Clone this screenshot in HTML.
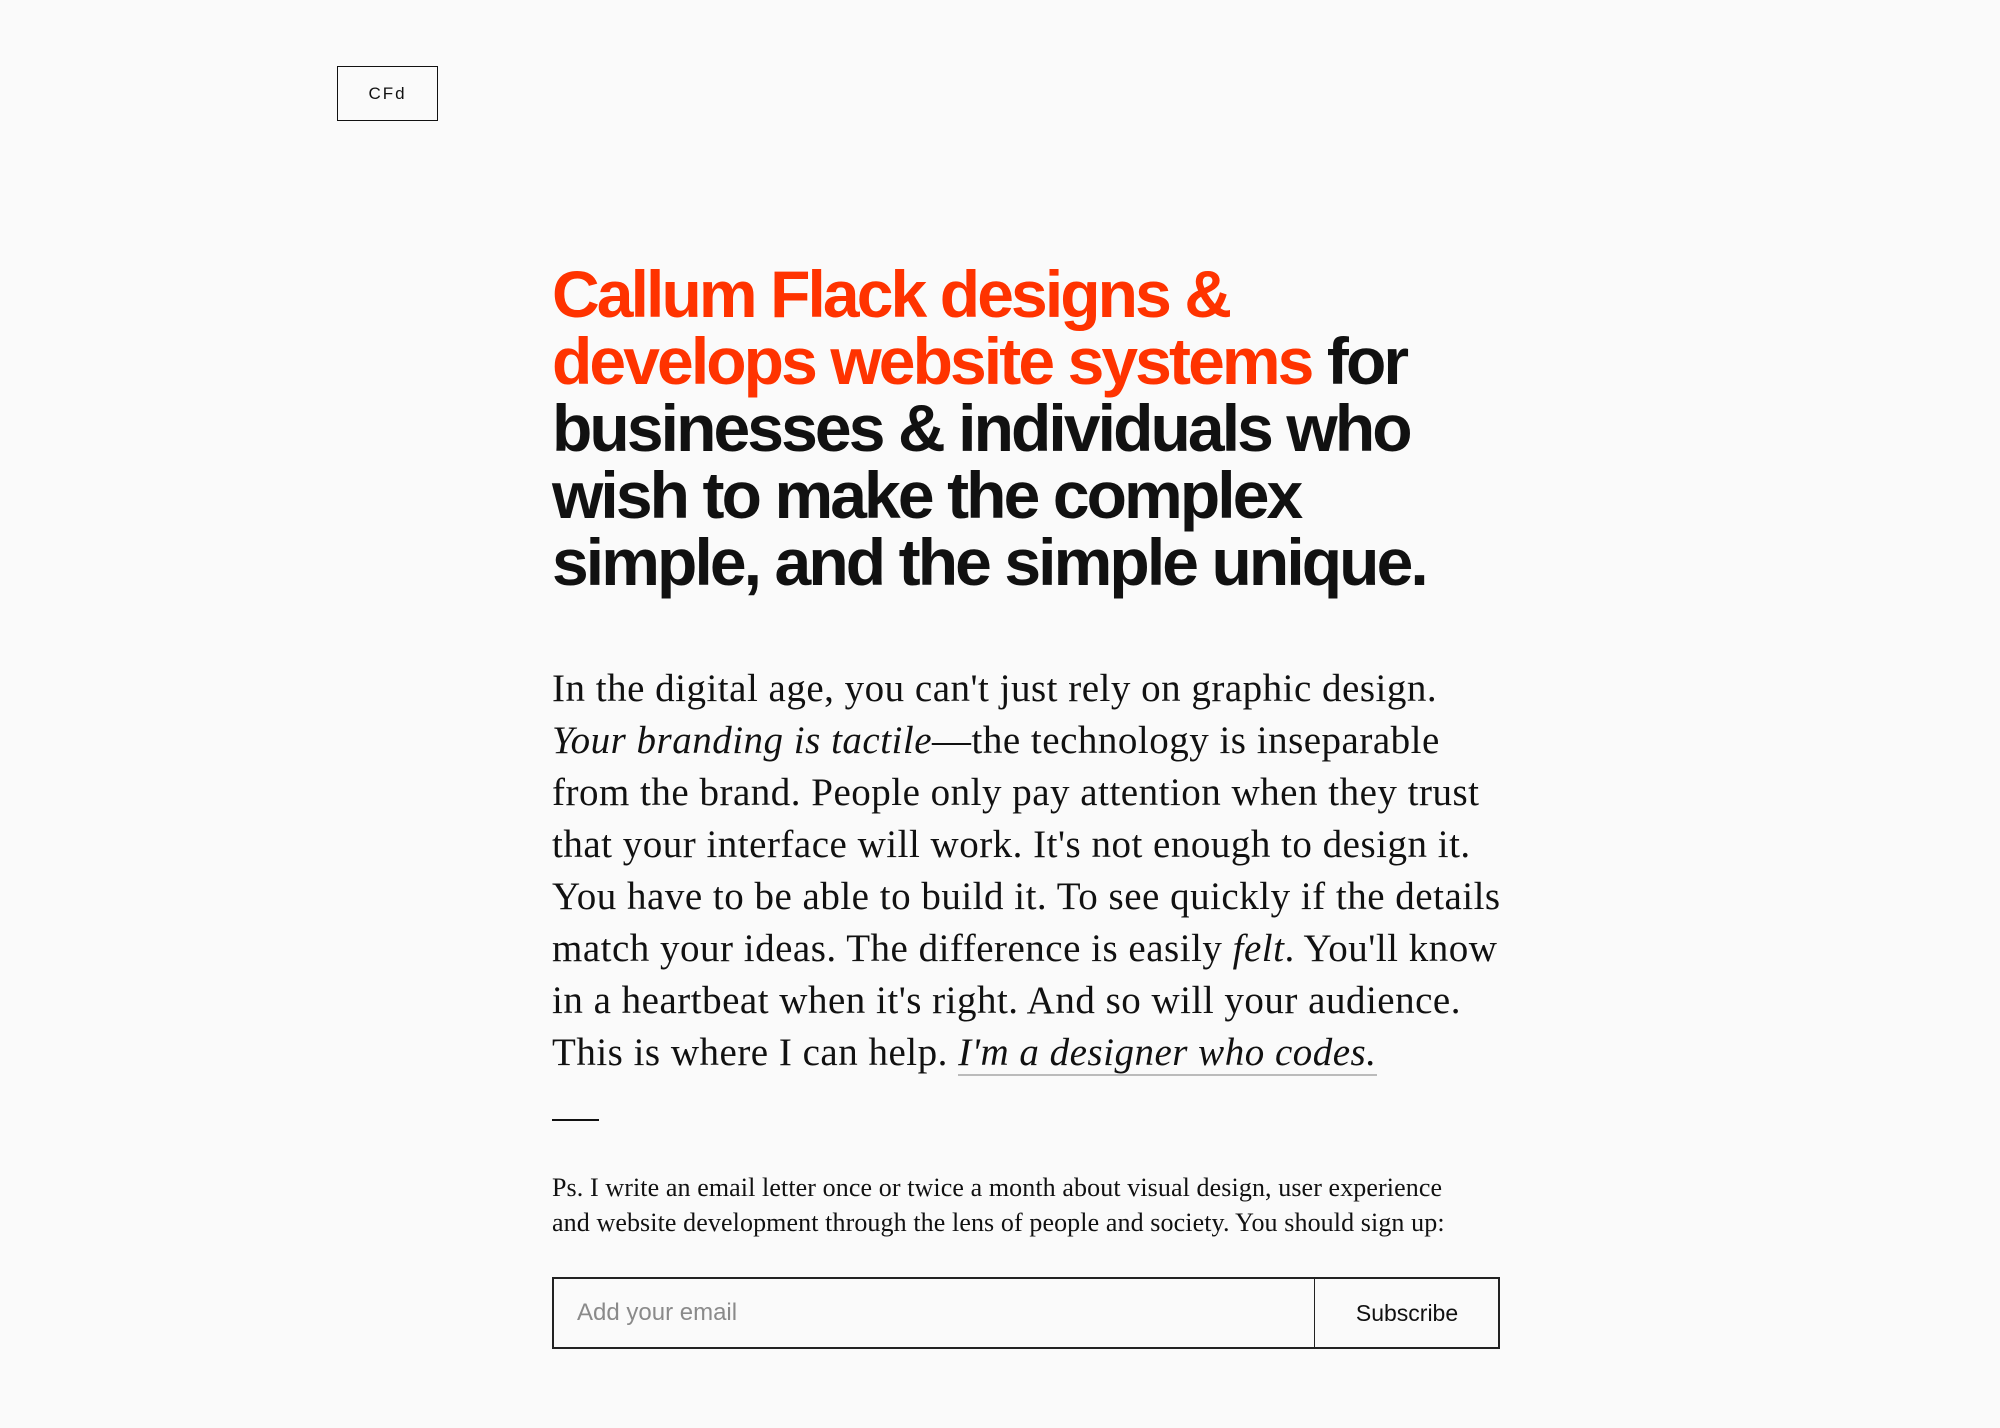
<!DOCTYPE html>
<html><head><meta charset="utf-8"><style>
html,body{margin:0;padding:0;background:#fafafa;width:2000px;height:1428px;overflow:hidden;position:relative}
.logo{position:absolute;left:337px;top:66px;width:99px;height:53px;border:1.5px solid #111;font:400 17px "Liberation Sans",sans-serif;letter-spacing:2px;display:flex;align-items:center;justify-content:center;color:#111}
.h{position:absolute;left:552px;font:700 66px/67px "Liberation Sans",sans-serif;letter-spacing:-2.9px;color:#111;white-space:nowrap}
.o{color:#ff3300}
.b{position:absolute;left:552px;font:39px/52px "Liberation Serif",serif;letter-spacing:0.5px;color:#111;white-space:nowrap}
.b i a{color:#111;text-decoration:none;border-bottom:2px solid #bbb}
.dash{position:absolute;left:552px;top:1119px;width:47px;height:2px;background:#111}
.ps{position:absolute;left:552px;font:26px/35px "Liberation Serif",serif;letter-spacing:0.1px;color:#111;white-space:nowrap}
.form{position:absolute;left:552px;top:1277px;width:944px;height:68px;border:2px solid #222}
.form .in{position:absolute;left:23px;top:0;font:24px/68px "Liberation Sans",sans-serif;color:#8a8a8a}
.form .btn{position:absolute;left:760px;top:0;width:184px;height:68px;border-left:1.5px solid #222;font:23px/68px "Liberation Sans",sans-serif;color:#111;text-align:center}
</style></head><body>
<div class="logo">CFd</div>
<div class="h" style="top:261px"><span class="o">Callum Flack designs &amp;</span><br><span class="o">develops website systems</span> for<br>businesses &amp; individuals who<br>wish to make the complex<br>simple, and the simple unique.</div>
<div class="b" style="top:663px">In the digital age, you can't just rely on graphic design.<br><i>Your branding is tactile</i>—the technology is inseparable<br>from the brand. People only pay attention when they trust<br>that your interface will work. It's not enough to design it.<br>You have to be able to build it. To see quickly if the details<br>match your ideas. The difference is easily <i>felt</i>. You'll know<br>in a heartbeat when it's right. And so will your audience.<br>This is where I can help. <i><a>I'm a designer who codes.</a></i></div>
<div class="dash"></div>
<div class="ps" style="top:1170px">Ps. I write an email letter once or twice a month about visual design, user experience<br>and website development through the lens of people and society. You should sign up:</div>
<div class="form"><div class="in">Add your email</div><div class="btn">Subscribe</div></div>
</body></html>
